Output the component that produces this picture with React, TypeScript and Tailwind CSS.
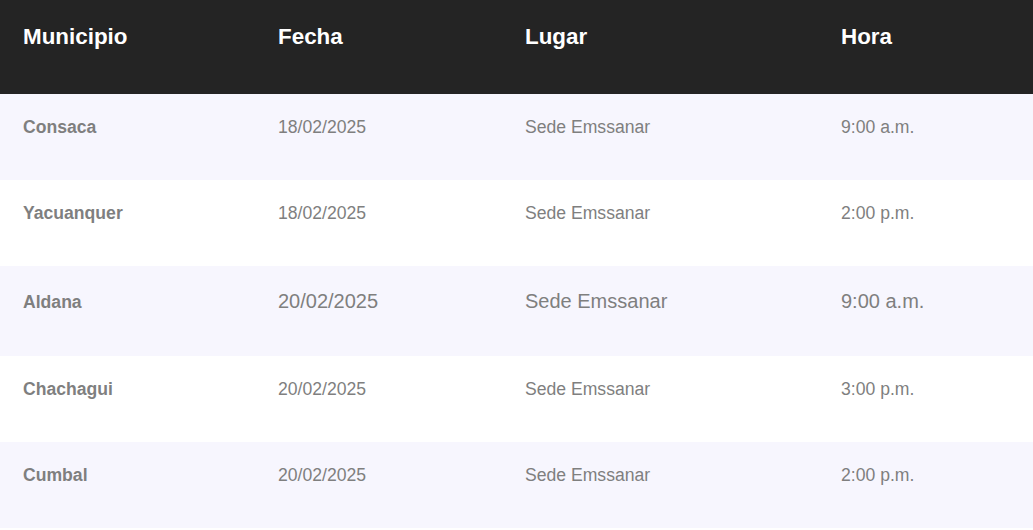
const rows = [
  { municipio: "Consaca", fecha: "18/02/2025", lugar: "Sede Emssanar", hora: "9:00 a.m." },
  { municipio: "Yacuanquer", fecha: "18/02/2025", lugar: "Sede Emssanar", hora: "2:00 p.m." },
  { municipio: "Aldana", fecha: "20/02/2025", lugar: "Sede Emssanar", hora: "9:00 a.m.", big: true },
  { municipio: "Chachagui", fecha: "20/02/2025", lugar: "Sede Emssanar", hora: "3:00 p.m." },
  { municipio: "Cumbal", fecha: "20/02/2025", lugar: "Sede Emssanar", hora: "2:00 p.m." },
];

export default function App() {
  return (
    <div className="w-[1033px] bg-white font-['Liberation_Sans',Arial,sans-serif]">
      <table className="w-full table-fixed border-collapse text-left">
        <colgroup>
          <col className="w-[255px]" />
          <col className="w-[247px]" />
          <col className="w-[316px]" />
          <col className="w-[215px]" />
        </colgroup>
        <thead>
          <tr className="bg-[#242424] text-[22.4px] font-bold leading-[25px] text-white">
            <th className="pl-[23px] pt-6 pb-[45px] align-top font-bold">Municipio</th>
            <th className="pl-[23px] pt-6 pb-[45px] align-top font-bold">Fecha</th>
            <th className="pl-[23px] pt-6 pb-[45px] align-top font-bold">Lugar</th>
            <th className="pl-[23px] pt-6 pb-[45px] align-top font-bold">Hora</th>
          </tr>
        </thead>
        <tbody>
          {rows.map((r, i) => (
            <tr key={r.municipio} className={i % 2 === 0 ? "bg-[#f7f6fe]" : "bg-white"}>
              <td className="pl-[23px] pt-[23px] pb-[43px] align-baseline text-[17.6px] font-bold leading-[20px] text-[#7f7f7f]">
                {r.municipio}
              </td>
              {[r.fecha, r.lugar, r.hora].map((v, j) => (
                <td
                  key={j}
                  className={
                    r.big
                      ? "pl-[23px] pt-[23px] pb-[43px] align-baseline text-[20px] leading-[24px] text-[#7f7f7f]"
                      : "pl-[23px] pt-[23px] pb-[43px] align-baseline text-[17.6px] leading-[20px] text-[#7f7f7f]"
                  }
                >
                  {v}
                </td>
              ))}
            </tr>
          ))}
        </tbody>
      </table>
    </div>
  );
}
